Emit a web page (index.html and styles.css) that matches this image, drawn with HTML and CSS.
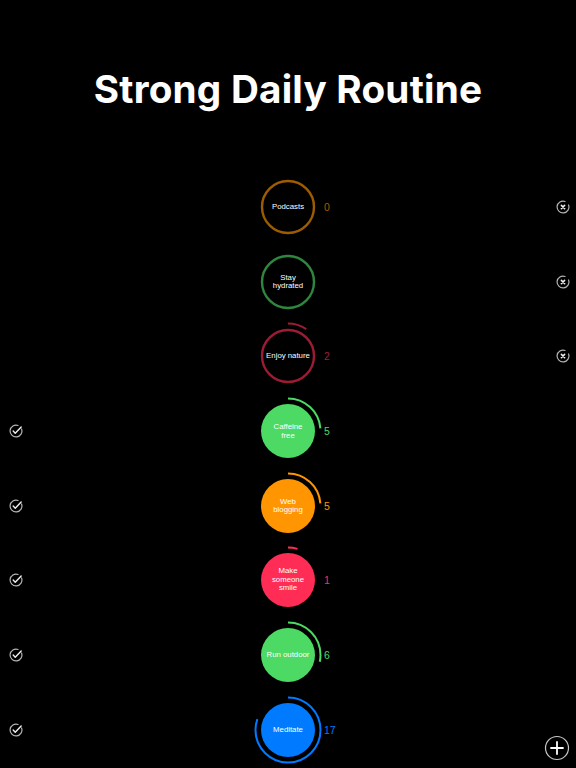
FILE: index.html
```html
<!DOCTYPE html>
<html lang="en">
<head>
    <meta charset="UTF-8">
    <meta name="viewport" content="width=device-width, initial-scale=1.0">
    <title>Strong Daily Routine</title>
    <link rel="stylesheet" href="styles.css">
</head>
<body>
    <div class="screen">
        <header class="header">
            <h1>Strong Daily Routine</h1>
        </header>

        <ul class="habits" id="habits"></ul>

        <button class="addbtn" aria-label="Add habit">
            <svg width="26" height="26" viewBox="0 0 26 26">
                <circle cx="13" cy="13" r="11.5" fill="none" stroke="#c8c8c8" stroke-width="1.2"/>
                <path d="M13 7 V19 M7 13 H19" stroke="#fff" stroke-width="1.8" stroke-linecap="round"/>
            </svg>
        </button>
    </div>

    <script>
        // habits list: done ones get a filled bubble
        const habits = [
            { name: "Podcasts", color: "#ff9500", count: 0, done: false },
            { name: "Stay<br>hydrated", color: "#4cd964", count: null, done: false },
            { name: "Enjoy nature", color: "#ff2d55", count: 2, done: false },
            { name: "Caffeine<br>free", color: "#4cd964", count: 5, done: true },
            { name: "Web<br>blogging", color: "#ff9500", count: 5, done: true },
            { name: "Make<br>someone<br>smile", color: "#ff2d55", count: 1, done: true },
            { name: "Run outdoor", color: "#4cd964", count: 6, done: true },
            { name: "Meditate", color: "#007aff", count: 17, done: true }
        ];

        const list = document.getElementById("habits");
        const ring = 2 * Math.PI * 32.5;

        const checkIcon = `
            <svg width="14" height="14" viewBox="0 0 13 13">
                <path d="M11.67 4.62 A5.5 5.5 0 1 1 8.38 1.33" fill="none" stroke="#b4b4b4" stroke-width="1.1" stroke-linecap="round"/>
                <path d="M3.9 6.6 L5.8 8.5 L11.3 2.7" fill="none" stroke="#f0f0f0" stroke-width="1.3" stroke-linecap="round" stroke-linejoin="round"/>
            </svg>`;

        const crossIcon = `
            <svg width="14" height="14" viewBox="0 0 13 13">
                <path d="M11.67 4.62 A5.5 5.5 0 1 1 8.38 1.33" fill="none" stroke="#b4b4b4" stroke-width="1.1" stroke-linecap="round"/>
                <path d="M5 5 L8 8 M8 5 L5 8" fill="none" stroke="#f0f0f0" stroke-width="1.4" stroke-linecap="round"/>
            </svg>`;

        habits.forEach(function(h){
            const li = document.createElement("li");
            li.className = "habit" + (h.done ? " done" : "");

            // progress arc: 17 degrees per streak day
            let arc = "";
            if (h.count) {
                const len = ring * h.count * 17 / 360;
                arc = `<circle class="arc" cx="36" cy="36" r="32.5" stroke="${h.color}" stroke-dasharray="${len} ${ring}"/>`;
            }

            const body = h.done
                ? `<circle cx="36" cy="36" r="27" fill="${h.color}"/>`
                : `<circle cx="36" cy="36" r="26" fill="none" stroke="${h.color}" stroke-width="2.4"/>`;

            li.innerHTML = `
                <div class="side left">${h.done ? checkIcon : ""}</div>
                <div class="bubble">
                    <svg class="dial" width="72" height="72" viewBox="0 0 72 72">
                        <g class="${h.done ? "" : "dim"}">${arc}${body}</g>
                    </svg>
                    <span class="label">${h.name}</span>
                    <span class="count" style="color:${h.color}">${h.count === null ? "" : h.count}</span>
                </div>
                <div class="side right">${h.done ? "" : crossIcon}</div>`;
            list.appendChild(li);
        });
    </script>
</body>
</html>
```

FILE: styles.css
```css
body{
    margin: 0;
    background-color: #000;
    font-family: "Liberation Sans", Arial, sans-serif;
    color: #fff;
}

.screen{
    position: relative;
    width: 576px;
    height: 768px;
    overflow: hidden;
}

.header{
    height: 169.6px;
    box-sizing: border-box;
    padding-top: 70px;
}

h1{
    margin: 0;
    text-align: center;
    font-family: Inter, "Liberation Sans", sans-serif;
    font-weight: 700;
    font-size: 38.7px;
    line-height: 1;
    letter-spacing: 0.2px;
}

.habits{
    list-style: none;
    margin: 0;
    padding: 0;
}

.habit{
    height: 74.7px;
    display: grid;
    grid-template-columns: 1fr 72px 1fr;
    align-items: center;
}

.side{
    display: flex;
    align-items: center;
}
.side svg{
    display: block;
}
.left{
    padding-left: 9px;
}
.right{
    justify-content: flex-end;
    padding-right: 6px;
}

.bubble{
    position: relative;
    width: 72px;
    height: 72px;
}

.dial{
    display: block;
}
.dim{
    opacity: 0.62;
}
.arc{
    fill: none;
    stroke-width: 2;
    transform: rotate(-90deg);
    transform-origin: 36px 36px;
}

.label{
    position: absolute;
    left: 0;
    right: 0;
    top: 50%;
    transform: translateY(-50%);
    text-align: center;
    font-size: 7.8px;
    line-height: 8.5px;
    color: #fff;
}

.count{
    position: absolute;
    left: 72px;
    top: 50%;
    transform: translateY(-50%);
    font-size: 10.5px;
    line-height: 1;
}
.habit:not(.done) .count{
    opacity: 0.62;
}

.addbtn{
    position: absolute;
    left: 544px;
    top: 735px;
    width: 26px;
    height: 26px;
    padding: 0;
    border: none;
    background: none;
}
.addbtn svg{
    display: block;
}
```
